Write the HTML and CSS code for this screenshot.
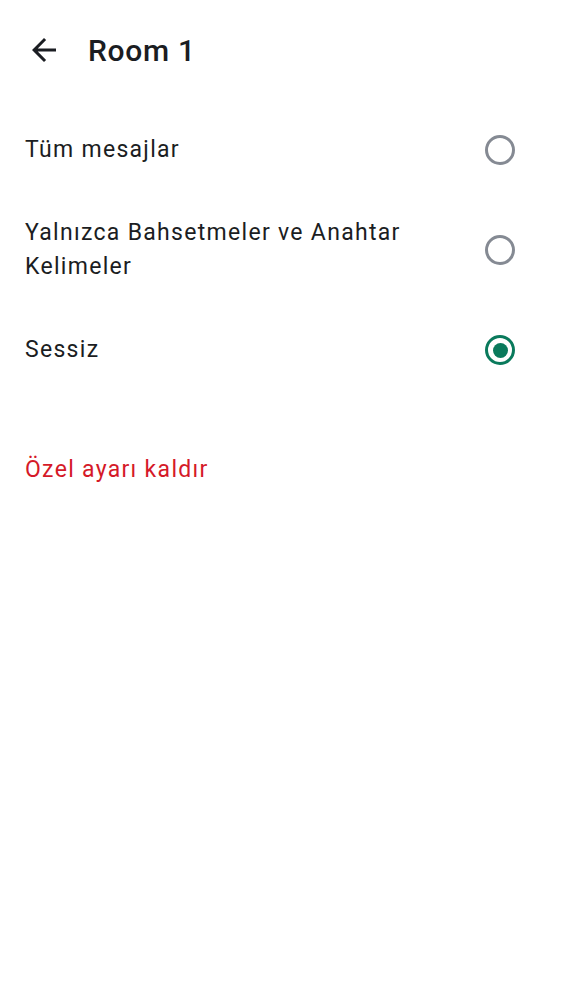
FILE: index.html
```html
<!DOCTYPE html>
<html lang="tr">
<head>
<meta charset="utf-8">
<link rel="stylesheet" href="styles.css">
</head>
<body>
<div class="screen">
  <header class="toolbar">
    <span class="back" aria-label="Geri">
      <svg viewBox="0 0 24 24" width="36" height="36"><path d="M20 11H7.83l5.59-5.59L12 4l-8 8 8 8 1.41-1.41L7.83 13H20v-2z" fill="#1b1d22"/></svg>
    </span>
    <h1 class="title">Room 1</h1>
  </header>
  <ul class="options">
    <li class="option">
      <span class="label">Tüm mesajlar</span>
      <span class="radio"></span>
    </li>
    <li class="option">
      <span class="label">Yalnızca Bahsetmeler ve Anahtar Kelimeler</span>
      <span class="radio"></span>
    </li>
    <li class="option">
      <span class="label">Sessiz</span>
      <span class="radio checked"></span>
    </li>
  </ul>
  <div class="remove">Özel ayarı kaldır</div>
</div>
</body>
</html>
```

FILE: styles.css
```css
html, body {
  margin: 0;
  padding: 0;
  background: #ffffff;
}
body {
  font-family: Roboto, "Noto Sans", sans-serif;
  color: #1b1d22;
}
.screen {
  width: 562px;
  min-height: 1000px;
}
.toolbar {
  display: flex;
  align-items: center;
  height: 100px;
  padding-left: 26px;
  box-sizing: border-box;
}
.back {
  display: flex;
  width: 36px;
  height: 36px;
}
.title {
  margin: 0 0 0 26px;
  font-size: 30px;
  font-weight: 500;
  letter-spacing: 0.7px;
}
.options {
  list-style: none;
  margin: 0;
  padding: 0;
}
.option {
  display: flex;
  align-items: center;
  justify-content: space-between;
  min-height: 100px;
  padding: 0 47px 0 25px;
  box-sizing: border-box;
}
.label {
  font-size: 23px;
  line-height: 34px;
  letter-spacing: 1.3px;
  max-width: 400px;
}
.radio {
  flex: none;
  width: 30px;
  height: 30px;
  border: 3px solid #858a93;
  border-radius: 50%;
  box-sizing: border-box;
  display: flex;
  align-items: center;
  justify-content: center;
}
.radio.checked {
  border-color: #0a7a5c;
}
.radio.checked::after {
  content: "";
  width: 15px;
  height: 15px;
  border-radius: 50%;
  background: #0a7a5c;
}
.remove {
  margin-top: 53px;
  padding-left: 25px;
  font-size: 23px;
  line-height: 34px;
  letter-spacing: 1.3px;
  color: #d51928;
}
```
